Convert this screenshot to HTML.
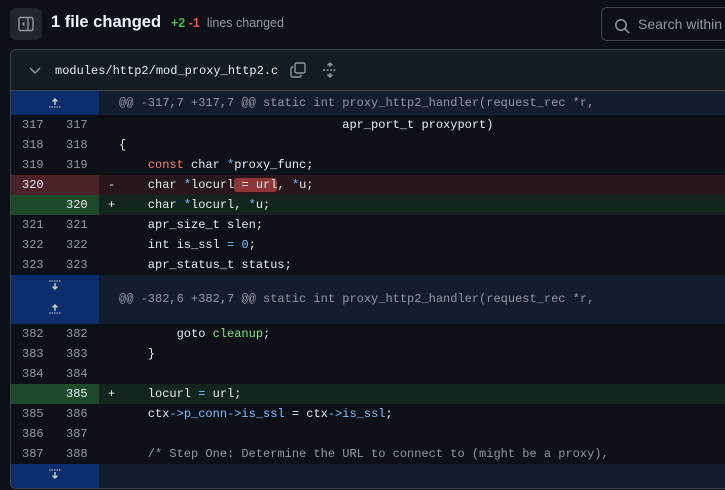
<!DOCTYPE html>
<html><head><style>
*{margin:0;padding:0;box-sizing:border-box}
body{width:725px;height:490px;background:#0d1117;overflow:hidden;font-family:"Liberation Sans",sans-serif;color:#e6edf3;position:relative}
.tb{position:absolute;left:10px;top:8px;width:32px;height:32px;background:#21262d;border-radius:6px}
.title{position:absolute;left:51px;top:13px;font-size:16.5px;font-weight:bold;color:#f0f6fc}
.stat{position:absolute;left:171px;top:16px;font-size:12.5px;color:#9198a1}
.search{position:absolute;left:601px;top:7px;width:140px;height:34px;border:1px solid #3d444d;border-radius:6px;color:#9198a1;font-size:14px;padding:8px 0 0 36px}
.box{position:absolute;left:10px;top:49px;width:730px;height:440px;border:1px solid #3d444d;border-radius:6px;overflow:hidden}
.hdr{height:41px;background:#151b23;border-bottom:1px solid #3d444d;position:relative}
.fn{position:absolute;left:44px;top:14px;font-family:"Liberation Mono",monospace;font-size:12px;color:#e6edf3}
.row{height:20px;position:relative;font-family:"Liberation Mono",monospace;font-size:12px;line-height:20px;white-space:pre}
.row .o,.row .n{position:absolute;top:0;width:44px;height:100%;color:#9198a1;padding-left:11px}
.row .o{left:0}.row .n{left:44px}
.row .s{position:absolute;left:97px}
.row .c{position:absolute;left:108px}
.del{background:#25171c}.del .o,.del .n{background:#4c2127;color:#e6edf3}
.add{background:#12261e}.add .o,.add .n{background:#1e4a2b;color:#e6edf3}
.hk{background:#131d2e;position:relative;font-family:"Liberation Mono",monospace;font-size:12px;color:#9198a1;white-space:pre}
.hk .g{position:absolute;left:0;top:0;width:88px;height:100%;background:#0c2d6b}
.hk .t{position:absolute;left:108px}
.k{color:#ff7b72}.b{color:#79c0ff}.gr{color:#7ee787}.cm{color:#9198a1}
.hl{background:#8e3535;border-radius:3px}
</style></head><body>
<div class="tb"><svg width="32" height="32" viewBox="0 0 32 32"><rect x="9" y="9.5" width="14" height="13" rx="1.5" fill="none" stroke="#9198a1" stroke-width="1.4"/><line x1="18" y1="9.5" x2="18" y2="22.5" stroke="#9198a1" stroke-width="1.4"/><path d="M14.5 13.5 L12 16 L14.5 18.5Z" fill="#9198a1"/></svg></div>
<div class="title">1 file changed</div>
<div class="stat"><span style="color:#3fb950;font-weight:bold">+2</span> <span style="color:#f85149;font-weight:bold">-1</span>&nbsp; lines changed</div>
<div class="search"><svg style="position:absolute;left:12px;top:10px" width="16" height="16" viewBox="0 0 16 16"><circle cx="7" cy="7" r="5.2" fill="none" stroke="#9198a1" stroke-width="1.5"/><line x1="11" y1="11" x2="15" y2="15" stroke="#9198a1" stroke-width="1.5"/></svg>Search within</div>
<div class="box">
<div class="hdr">
<svg style="position:absolute;left:17px;top:14px" width="14" height="12" viewBox="0 0 14 12"><path d="M2 4 L7 9 L12 4" fill="none" stroke="#9198a1" stroke-width="1.5"/></svg>
<div class="fn">modules/http2/mod_proxy_http2.c</div>
<svg style="position:absolute;left:279px;top:12px" width="16" height="16" viewBox="0 0 16 16"><rect x="5" y="1" width="10" height="10" rx="1.5" fill="none" stroke="#9198a1" stroke-width="1.4"/><path d="M3.5 5 H2.5 a1.5 1.5 0 0 0 -1.5 1.5 V13.5 a1.5 1.5 0 0 0 1.5 1.5 H9.5 a1.5 1.5 0 0 0 1.5 -1.5 V12.5" fill="none" stroke="#9198a1" stroke-width="1.4"/></svg>
<svg style="position:absolute;left:311px;top:12px" width="16" height="16" viewBox="0 0 16 16"><path d="M8 1 V5 M5.5 3.5 L8 1 L10.5 3.5 M8 15 V11 M5.5 12.5 L8 15 L10.5 12.5" fill="none" stroke="#9198a1" stroke-width="1.4"/><path d="M1 8 H15" stroke="#9198a1" stroke-width="1.4" stroke-dasharray="2 1.5"/></svg>
</div>
<div class="hk" style="height:24px;line-height:24px"><div class="g"><svg style="position:absolute;left:37px;top:4px" width="14" height="16" viewBox="0 0 14 16"><path d="M7 4 V10 M4.5 6.5 L7 4 L9.5 6.5" fill="none" stroke="#c9d1d9" stroke-width="1.4"/><path d="M1 12 H13" stroke="#c9d1d9" stroke-dasharray="1.5 1"/></svg></div><span class="t">@@ -317,7 +317,7 @@ static int proxy_http2_handler(request_rec *r,</span></div>
<div class="row"><span class="o">317</span><span class="n">317</span><span class="c">                               apr_port_t proxyport)</span></div>
<div class="row"><span class="o">318</span><span class="n">318</span><span class="c">{</span></div>
<div class="row"><span class="o">319</span><span class="n">319</span><span class="c">    <span class="k">const</span> char <span class="b">*</span>proxy_func;</span></div>
<div class="row del"><span class="o">320</span><span class="n"></span><span class="s">-</span><span class="c">    char <span class="b">*</span>locurl<span class="hl"> = url</span>, <span class="b">*</span>u;</span></div>
<div class="row add"><span class="o"></span><span class="n">320</span><span class="s">+</span><span class="c">    char <span class="b">*</span>locurl, <span class="b">*</span>u;</span></div>
<div class="row"><span class="o">321</span><span class="n">321</span><span class="c">    apr_size_t slen;</span></div>
<div class="row"><span class="o">322</span><span class="n">322</span><span class="c">    int is_ssl <span class="b">=</span> <span class="b">0</span>;</span></div>
<div class="row"><span class="o">323</span><span class="n">323</span><span class="c">    apr_status_t status;</span></div>
<div class="hk" style="height:49px;line-height:49px"><div class="g"><svg style="position:absolute;left:37px;top:4px" width="14" height="42" viewBox="0 0 14 42"><path d="M1 2 H13" stroke="#c9d1d9" stroke-dasharray="1.5 1"/><path d="M7 4 V10 M4.5 7.5 L7 10 L9.5 7.5" fill="none" stroke="#c9d1d9" stroke-width="1.4"/><path d="M7 26 V32 M4.5 28.5 L7 26 L9.5 28.5" fill="none" stroke="#c9d1d9" stroke-width="1.4"/><path d="M1 34 H13" stroke="#c9d1d9" stroke-dasharray="1.5 1"/></svg></div><span class="t">@@ -382,6 +382,7 @@ static int proxy_http2_handler(request_rec *r,</span></div>
<div class="row"><span class="o">382</span><span class="n">382</span><span class="c">        goto <span class="gr">cleanup</span>;</span></div>
<div class="row"><span class="o">383</span><span class="n">383</span><span class="c">    }</span></div>
<div class="row"><span class="o">384</span><span class="n">384</span><span class="c"></span></div>
<div class="row add"><span class="o"></span><span class="n">385</span><span class="s">+</span><span class="c">    locurl <span class="b">=</span> url;</span></div>
<div class="row"><span class="o">385</span><span class="n">386</span><span class="c">    ctx<span class="b">-&gt;p_conn-&gt;is_ssl</span> = ctx<span class="b">-&gt;is_ssl</span>;</span></div>
<div class="row"><span class="o">386</span><span class="n">387</span><span class="c"></span></div>
<div class="row"><span class="o">387</span><span class="n">388</span><span class="c"><span class="cm">    /* Step One: Determine the URL to connect to (might be a proxy),</span></span></div>
<div class="hk" style="height:24px"><div class="g"><svg style="position:absolute;left:37px;top:4px" width="14" height="16" viewBox="0 0 14 16"><path d="M1 2 H13" stroke="#c9d1d9" stroke-dasharray="1.5 1"/><path d="M7 4 V10 M4.5 7.5 L7 10 L9.5 7.5" fill="none" stroke="#c9d1d9" stroke-width="1.4"/></svg></div></div>
</div>
</body></html>
